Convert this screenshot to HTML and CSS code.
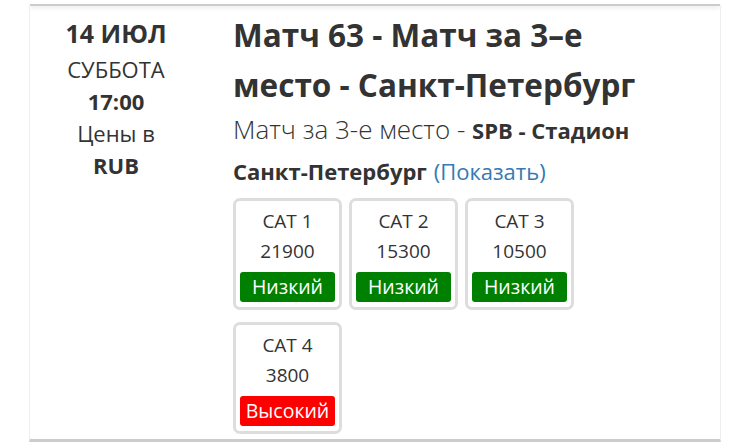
FILE: index.html
```html
<!DOCTYPE html>
<html lang="ru">
<head>
    <meta charset="UTF-8">
    <meta name="viewport" content="width=device-width, initial-scale=1.0">
    <title>Матч 63</title>
    <link rel="stylesheet" href="styles.css">
</head>
<body>
    <div class="prev-row"></div>
    <div class="match-row">
        <div class="match-date">
            <div class="day">14 ИЮЛ</div>
            <div>СУББОТА</div>
            <div class="bold">17:00</div>
            <div>Цены в</div>
            <div class="bold">RUB</div>
        </div>
        <div class="match-info">
            <h2 class="match-title">Матч 63 - Матч за 3–е место - Санкт-Петербург</h2>
            <p class="match-venue">Матч за 3-е место - <b>SPB - Стадион Санкт-Петербург</b> <a href="#">(Показать)</a></p>
            <div class="cats">
                <div class="cat">
                    <div>CAT 1</div>
                    <div>21900</div>
                    <div class="level low">Низкий</div>
                </div>
                <div class="cat">
                    <div>CAT 2</div>
                    <div>15300</div>
                    <div class="level low">Низкий</div>
                </div>
                <div class="cat">
                    <div>CAT 3</div>
                    <div>10500</div>
                    <div class="level low">Низкий</div>
                </div>
                <div class="cat">
                    <div>CAT 4</div>
                    <div>3800</div>
                    <div class="level high">Высокий</div>
                </div>
            </div>
        </div>
    </div>
</body>
</html>
```

FILE: styles.css
```css
body {
    margin: 0;
    font-family: "Open Sans", Arial, sans-serif;
    color: #333;
    background-color: #fff;
}
.prev-row {
    margin: 0 30px;
    height: 4px;
    border-bottom: 2px solid #ccc;
    box-shadow: 0 3px 4px rgba(0, 0, 0, 0.06);
}
.match-row {
    display: flex;
    margin: 0 29px;
    border-left: 1px solid #eee;
    border-right: 1px solid #eee;
    border-bottom: 3px solid #ccc;
    padding: 4px 0 0 0;
    height: 436px;
    box-sizing: border-box;
}
.match-date {
    width: 172px;
    padding-top: 7px;
    text-align: center;
    font-size: 22px;
    line-height: 32px;
}
.match-date .day {
    font-size: 25px;
    font-weight: bold;
    line-height: 32px;
    margin-bottom: 4px;
}
.bold {
    font-weight: bold;
}
.match-info {
    width: 434px;
    padding-left: 31px;
}
.match-title {
    margin: 0;
    font-size: 31.5px;
    line-height: 50px;
    font-weight: bold;
}
.match-venue {
    margin: -1px 0 0 0;
    font-size: 26px;
    line-height: 40px;
    font-weight: 300;
}
.match-venue b {
    font-size: 22px;
    line-height: 40px;
    font-weight: bold;
}
.match-venue a {
    color: #337ab7;
    text-decoration: none;
    font-size: 22px;
    line-height: 40px;
    font-weight: normal;
}
.cats {
    display: flex;
    flex-wrap: wrap;
    gap: 12px 7px;
    width: 360px;
    margin-top: 7px;
}
.cat {
    width: 109px;
    height: 112px;
    box-sizing: border-box;
    border: 3px solid #ddd;
    border-radius: 7px;
    padding: 5px 4px 0 4px;
    text-align: center;
    font-size: 19px;
    line-height: 30px;
}
.level {
    margin-top: 6px;
    color: #fff;
    font-size: 19.5px;
    line-height: 30px;
    border-radius: 3px;
}
.low {
    background-color: #008000;
}
.high {
    background-color: #ff0000;
}
```
